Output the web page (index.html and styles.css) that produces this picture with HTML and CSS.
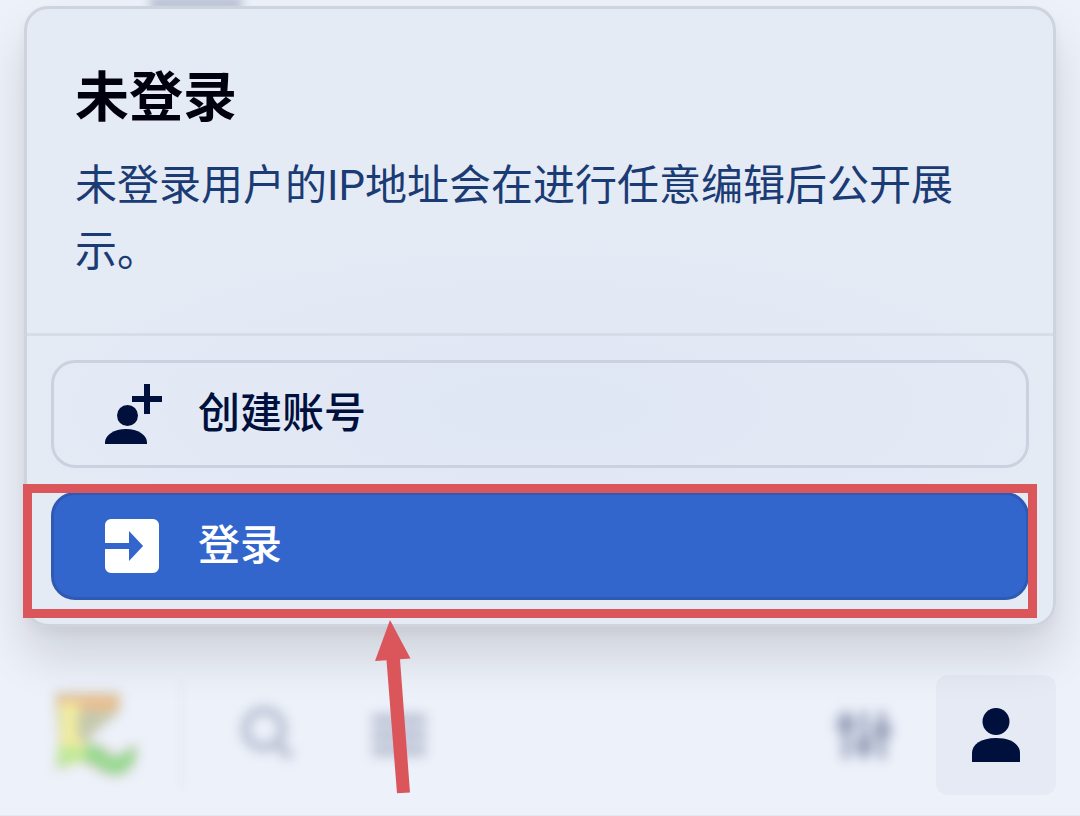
FILE: index.html
```
<!DOCTYPE html>
<html lang="zh-CN">
<head>
    <meta charset="UTF-8">
    <meta name="viewport" content="width=device-width, initial-scale=1.0">
    <title>未登录</title>
    <link rel="stylesheet" href="styles.css">
</head>
<body>
    <div class="page-top" aria-hidden="true"><span class="page-top-text"></span></div>

    <main class="card">
        <header class="card-header">
            <h1>未登录</h1>
            <p>未登录用户的IP地址会在进行任意编辑后公开展示。</p>
        </header>
        <div class="card-actions">
            <button class="btn" type="button">
                <svg class="icon" viewBox="0 0 20 20" fill="currentColor" aria-hidden="true">
                    <path d="M14 0h2v4h4v2h-4v4h-2V6h-4V4h4z"/>
                    <circle cx="8.5" cy="10.5" r="3.5"/>
                    <path d="M8 15c-4 0-7 2-7 4.500V20h14v-.5C15 17 12 15 8 15z"/>
                </svg>
                创建账号
            </button>
            <div class="login-row">
                <button class="btn btn-primary" type="button">
                    <svg class="icon" viewBox="0 0 20 20" fill="currentColor" aria-hidden="true">
                        <path d="M3 1h14a2 2 0 0 1 2 2v14a2 2 0 0 1-2 2H3a2 2 0 0 1-2-2v-6h8v4l4.700-5L9 5v4H1V3a2 2 0 0 1 2-2z"/>
                    </svg>
                    登录
                </button>
                <div class="highlight">
                    <svg class="arrow" viewBox="0 0 36 174" aria-hidden="true">
                        <path d="M15 0L35.500 38.500l-10.500.800L35 172.500l-13 .800L11.500 40.300 0 41z"/>
                    </svg>
                </div>
            </div>
        </div>
    </main>

    <nav class="bar">
        <a class="logo blurred" href="#" aria-label="首页">
            <svg viewBox="0 0 96 96" aria-hidden="true">
                <path d="M7 6h65v18L42 50l-2 6 14 2c6 4 8 10 14 10 7 0 11-9 21-10 2 18-9 33-25 31-14-2-20-13-34-14L8 83l3-34z" fill="#c5c9ad"/>
                <path d="M10 9h60v14H10z" fill="#edbd8e"/>
                <path d="M12 16h20l-3 22 2 14 12 12-8 12-24 2 2-30z" fill="#f1eda0"/>
                <path d="M10 60h20l8 12-28 8z" fill="#bde896"/>
                <path d="M38 60c14-4 18 12 28 12 9 0 13-8 21-9 1 13-9 23-22 22-12-2-16-13-31-13z" fill="#8fdc8c"/>
            </svg>
        </a>
        <span class="separator"></span>
        <button class="bar-btn blurred" type="button" aria-label="搜索">
            <svg class="icon" viewBox="0 0 20 20" fill="none" stroke="currentColor" stroke-width="3" aria-hidden="true">
                <circle cx="9" cy="8" r="6.200"/>
                <path d="M13 12.500l5 5"/>
            </svg>
        </button>
        <button class="bar-btn blurred" type="button" aria-label="菜单">
            <svg class="icon" viewBox="0 0 20 20" fill="currentColor" aria-hidden="true">
                <path d="M1 3h18v3.700H1zM1 8.100h18v3.800H1zM1 13.300h18V17H1z"/>
            </svg>
        </button>
        <span class="spacer"></span>
        <button class="bar-btn blurred" type="button" aria-label="设置">
            <svg class="icon dark" viewBox="0 0 20 20" fill="currentColor" aria-hidden="true">
                <path d="M2.800 2h2.400v16H2.800zM8.800 2h2.400v16H8.800zM14.800 2h2.400v16h-2.400z"/>
                <path d="M1 4h6v5H1zM7 11h6v5H7zM13 6h6v5h-6z"/>
            </svg>
        </button>
        <button class="bar-btn active" type="button" aria-label="用户">
            <svg class="icon" viewBox="0 0 20 20" fill="currentColor" aria-hidden="true">
                <circle cx="10" cy="5.500" r="4.500"/>
                <path d="M10 11c-5 0-8 2.200-8 5v3h16v-3c0-2.800-3-5-8-5z"/>
            </svg>
        </button>
    </nav>
</body>
</html>
```
FILE: styles.css
```
* {
    box-sizing: border-box;
}
body {
    display: flex;
    flex-direction: column;
    min-height: 100vh;
    margin: 0;
    background: #edf1fa;
    color: #00103c;
    font-family: Roboto, "Noto Sans CJK SC", sans-serif;
    font-size: 42px;
}
button {
    font: inherit;
    color: inherit;
    cursor: pointer;
}
.page-top {
    height: 6px;
    padding-left: 150px;
    overflow: hidden;
}
.page-top-text {
    display: block;
    width: 92px;
    height: 6px;
    background: #8f9ab6;
    filter: blur(5px);
}
.card {
    position: relative;
    z-index: 1;
    margin: 0 24px;
    border: 3px solid #ced3de;
    border-radius: 24px;
    background: radial-gradient(ellipse 540px 180px at 50% 65%, #dfe6f4, #e5ebf5);
    box-shadow: 0 6px 12px rgba(0, 0, 0, 0.04), 0 30px 48px rgba(0, 0, 0, 0.13);
}
.card-header {
    padding: 48px;
    border-bottom: 3px solid #d6dce8;
}
h1 {
    margin: 0 0 12px;
    color: #00000f;
    font-size: 54px;
    font-weight: 700;
    line-height: 84px;
}
p {
    margin: 0;
    color: #1b3b75;
    line-height: 66px;
}
.card-actions {
    display: flex;
    flex-direction: column;
    gap: 24px;
    padding: 24px;
}
.login-row {
    position: relative;
}
.btn {
    display: flex;
    align-items: center;
    gap: 36px;
    width: 100%;
    height: 108px;
    padding: 0 48px;
    border: 3px solid #cbd1de;
    border-radius: 24px;
    background: transparent;
    font-weight: 500;
    line-height: 66px;
}
.btn-primary {
    border-color: #2f5ab3;
    background: #3366cc;
    color: #ffffff;
}
.icon {
    display: block;
    flex: none;
    width: 60px;
    height: 60px;
}
/* red marker around the login button */
.highlight {
    position: absolute;
    top: -8px;
    right: -8px;
    bottom: -18px;
    left: -28px;
    border: 9px solid #da565b;
    pointer-events: none;
}
.arrow {
    position: absolute;
    top: 127px;
    left: 343px;
    width: 36px;
    height: 174px;
    fill: #da565b;
}
.bar {
    display: flex;
    align-items: center;
    gap: 12px;
    padding: 48px 24px 20px;
    border-bottom: 1px solid #e3e7f0;
}
.logo {
    display: flex;
    justify-content: center;
    width: 144px;
}
.logo svg {
    width: 96px;
    height: 96px;
}
.separator {
    width: 3px;
    height: 108px;
    margin-right: 12px;
    background: #e6eaf3;
    filter: blur(3px);
}
.spacer {
    flex: 1;
}
.bar-btn {
    display: flex;
    align-items: center;
    justify-content: center;
    width: 120px;
    height: 120px;
    padding: 0;
    border: none;
    border-radius: 12px;
    background: none;
}
.bar-btn.active {
    background: rgba(0, 16, 60, 0.03);
}
.blurred {
    filter: blur(6px);
}
.bar-btn.blurred {
    color: #b9c0d2;
}
.bar-btn .dark {
    color: #9aa3bb;
}
```
